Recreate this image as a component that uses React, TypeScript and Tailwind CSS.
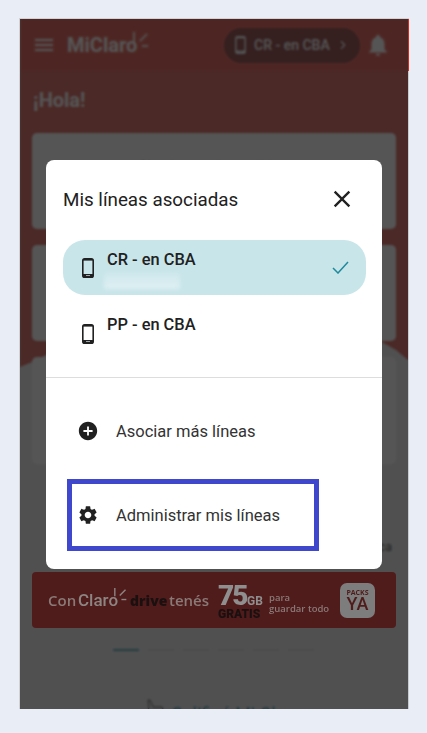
import { MdAddCircle, MdClose, MdMenu, MdNotifications, MdSettings } from "react-icons/md";
import { LuChevronRight } from "react-icons/lu";

function PhoneIcon({ className }: { className?: string }) {
  return (
    <svg viewBox="0 0 12 20" className={className} fill="none">
      <rect x="0.8" y="0.8" width="10.4" height="18.4" rx="1.8" stroke="currentColor" strokeWidth="1.6" />
      <rect x="1" y="1" width="10" height="1.6" fill="currentColor" />
      <path d="M1 16h10v2.2a1.2 1.2 0 0 1-1.2 1.2H2.2A1.2 1.2 0 0 1 1 18.2z" fill="currentColor" />
      <rect x="4" y="17" width="4" height="1" fill="#9aa5a8" />
    </svg>
  );
}

function Rays({ className }: { className?: string }) {
  return (
    <svg viewBox="0 0 17 17" className={className} fill="none" stroke="currentColor" strokeWidth="1.7">
      <path d="M1 0v10" />
      <path d="M7 9l7-7" />
      <path d="M9 14h6" />
    </svg>
  );
}

function LineRow({ name, active }: { name: string; active?: boolean }) {
  return (
    <div className={`mx-[17px] flex h-[55px] w-[303px] items-center rounded-[22px] pl-[19px] pr-[17px] ${active ? "bg-[#c8e5ea]" : ""}`}>
      <PhoneIcon className="h-5 w-3 text-[#212121]" />
      <div className={`ml-[13px] flex h-full flex-col ${active ? "pt-[10px]" : "pt-[9px]"}`}>
        <span className="text-[16.4px] font-medium leading-5 text-[#212121]">{name}</span>
        {active && <div className="ml-[-3px] mt-[2px] h-[17px] w-[76px] bg-linear-to-b from-white/10 to-white/45 blur-[2px]" />}
      </div>
      {active && (
        <svg viewBox="0 0 17 13" className="ml-auto h-[13px] w-[17px]" fill="none" stroke="#1f8a9c" strokeWidth="1.5">
          <path d="M1 7l5 5L16 1" />
        </svg>
      )}
    </div>
  );
}

export default function App() {
  return (
    <div className="h-screen w-full overflow-hidden bg-[#e9eef6] pl-[19px] pt-[18px] font-['Roboto',sans-serif]">
      <div className="relative h-[691px] w-[390px] overflow-hidden border-l border-t border-[#cfd3d8] bg-[#c6cbd1]">
        <div className="relative h-full w-[388px] bg-[#e8e8e8]">
          {/* hero red shape with the curve at the bottom */}
          <svg viewBox="0 0 388 350" className="absolute left-0 top-0 h-[350px] w-[388px]">
            <path d="M0 0H388V341L376 331 362 323Q200 250 26 336L12 343 0 348Z" fill="#cc3328" />
          </svg>

          <div className="relative flex flex-col">
            <header className="flex h-[52px] w-[389px] items-center bg-[#da291c] text-white">
              <MdMenu className="ml-[12px] h-[24px] w-[24px]" />
              <div className="relative ml-[11px] flex w-[84px] items-center">
                <span className="text-[20px] font-bold leading-5">MiClaro</span>
                <Rays className="absolute left-[66px] top-[-3px] h-[17px] w-[17px]" />
              </div>
              <div className="ml-[73px] flex h-[35px] w-[136px] items-center rounded-full bg-[#6a0808] pl-[11px]">
                <PhoneIcon className="h-[18px] w-[11px]" />
                <span className="ml-[8px] text-[14px] font-medium">CR - en CBA</span>
                <LuChevronRight className="ml-[6px] h-[14px] w-[14px]" />
              </div>
              <MdNotifications className="ml-[5px] h-[26px] w-[26px]" />
            </header>

            <div className="flex h-[62px] items-center px-[13px] pb-[4px]">
              <h1 className="text-[20px] font-bold text-white">¡Hola!</h1>
            </div>

            <div className="flex flex-col gap-4 px-3">
              <div className="flex h-[96px] justify-center rounded-[5px] bg-white pt-[23px] text-[16px] text-[#333]">
                Sin datos disponibles
              </div>
              <div className="h-[96px] rounded-[5px] bg-white" />
              <div className="h-[107px] rounded-[5px] bg-white" />
            </div>

            <div className="mr-[16px] mt-[73px] h-5 text-right text-[12.5px] leading-5 text-[#111]">Ver consumo de línea clásica</div>

            <div className="relative z-20 mx-3 mt-[15px] h-[56px] rounded-[4px] bg-[#4f1c1b] blur-[0.5px]">
              <div className="flex h-full items-center pl-[16px] font-['Open_Sans',sans-serif] text-[#8a7a77]">
                <span className="w-[30px] text-[15px] font-semibold">Con</span>
                <span className="relative w-[52px] font-['Roboto',sans-serif] text-[17px] font-medium leading-5 text-[#8c8582]">
                  Claro
                  <Rays className="absolute left-[36px] top-[-2px] h-[14px] w-[14px]" />
                </span>
                <span className="w-[39px] text-[14px] font-extrabold text-[#1a1010]">drive</span>
                <span className="w-[49px] text-[15px] font-semibold">tenés</span>
                <div className="mt-[4px] flex w-[51px] flex-col font-['Roboto',sans-serif]">
                  <div className="flex items-end">
                    <span className="w-[29px] text-[28px] font-black leading-[24px] tracking-[-2px] text-[#8f8f8f]">75</span>
                    <span className="text-[12px] font-bold leading-[14px] text-[#8f8f8f]">GB</span>
                  </div>
                  <span className="text-[12px] font-black leading-[12px] text-[#1a1010]">GRATIS</span>
                </div>
                <div className="mt-[7px] flex w-[71px] flex-col text-[9.5px] font-semibold leading-[10px]">
                  <span>para</span>
                  <span className="mt-[1px] whitespace-nowrap">guardar todo</span>
                </div>
                <div className="flex h-[35px] w-[35px] shrink-0 flex-col items-center justify-center rounded-[7px] bg-[#7d7d7d] text-[#4f1c1b]">
                  <span className="text-[7px] font-bold leading-[7px]">PACKS</span>
                  <span className="font-['Roboto',sans-serif] text-[18px] font-medium leading-[15px]">YA</span>
                </div>
              </div>
            </div>

            <div className="ml-[93px] mt-[21px] flex gap-[9px]">
              <div className="h-[2px] w-[26px] bg-[#1f8a9c]" />
              <div className="h-[2px] w-[26px] bg-[#cfcfcf]" />
              <div className="h-[2px] w-[26px] bg-[#cfcfcf]" />
              <div className="h-[2px] w-[26px] bg-[#cfcfcf]" />
              <div className="h-[2px] w-[26px] bg-[#cfcfcf]" />
              <div className="h-[2px] w-[26px] bg-[#cfcfcf]" />
            </div>

            <div className="ml-[125px] mt-[48px] flex items-start">
              <svg viewBox="0 0 20 20" className="h-5 w-5" fill="none" stroke="#222" strokeWidth="1">
                <path d="M1 20V12L4 9 3 1h2l3 7h9l1 2v10" />
              </svg>
              <span className="ml-[6px] mt-[2px] text-[18px] leading-[26px] text-[#1f8a9c]">Calificá Mi Claro</span>
            </div>
          </div>

          {/* backdrop */}
          <div className="absolute inset-0 z-10 bg-[#262626]/[.785] backdrop-blur-[1px]" />

          {/* modal */}
          <div className="absolute left-[26px] top-[141px] z-30 w-[336px] rounded-[8px] bg-white pb-[18px]">
            <div className="flex h-[78px] items-center justify-between pl-[17px] pr-[26px]">
              <h2 className="pt-[2px] text-[18.8px] font-normal text-[#212121]">Mis líneas asociadas</h2>
              <MdClose className="h-[28px] w-[28px] text-[#212121]" />
            </div>
            <div className="mt-[2px] flex flex-col gap-[11px]">
              <LineRow name="CR - en CBA" active />
              <LineRow name="PP - en CBA" />
            </div>
            <div className="mt-[16px] h-px bg-[#dddddd]" />
            <div className="ml-[21px] mt-[17px] flex flex-col gap-3">
              <div className="flex h-[72px] w-[252px] items-center border-[5px] border-transparent pl-[5px]">
                <MdAddCircle className="h-[22px] w-[22px] text-[#212121]" />
                <span className="ml-[17px] pt-[2px] text-[16.5px] text-[#333]">Asociar más líneas</span>
              </div>
              <div className="flex h-[72px] w-[252px] items-center border-[5px] border-[#3f48cc] pl-[5px]">
                <MdSettings className="h-[22px] w-[22px] text-[#212121]" />
                <span className="ml-[17px] pt-[2px] text-[16.5px] text-[#333]">Administrar mis líneas</span>
              </div>
            </div>
          </div>
        </div>
      </div>
    </div>
  );
}
